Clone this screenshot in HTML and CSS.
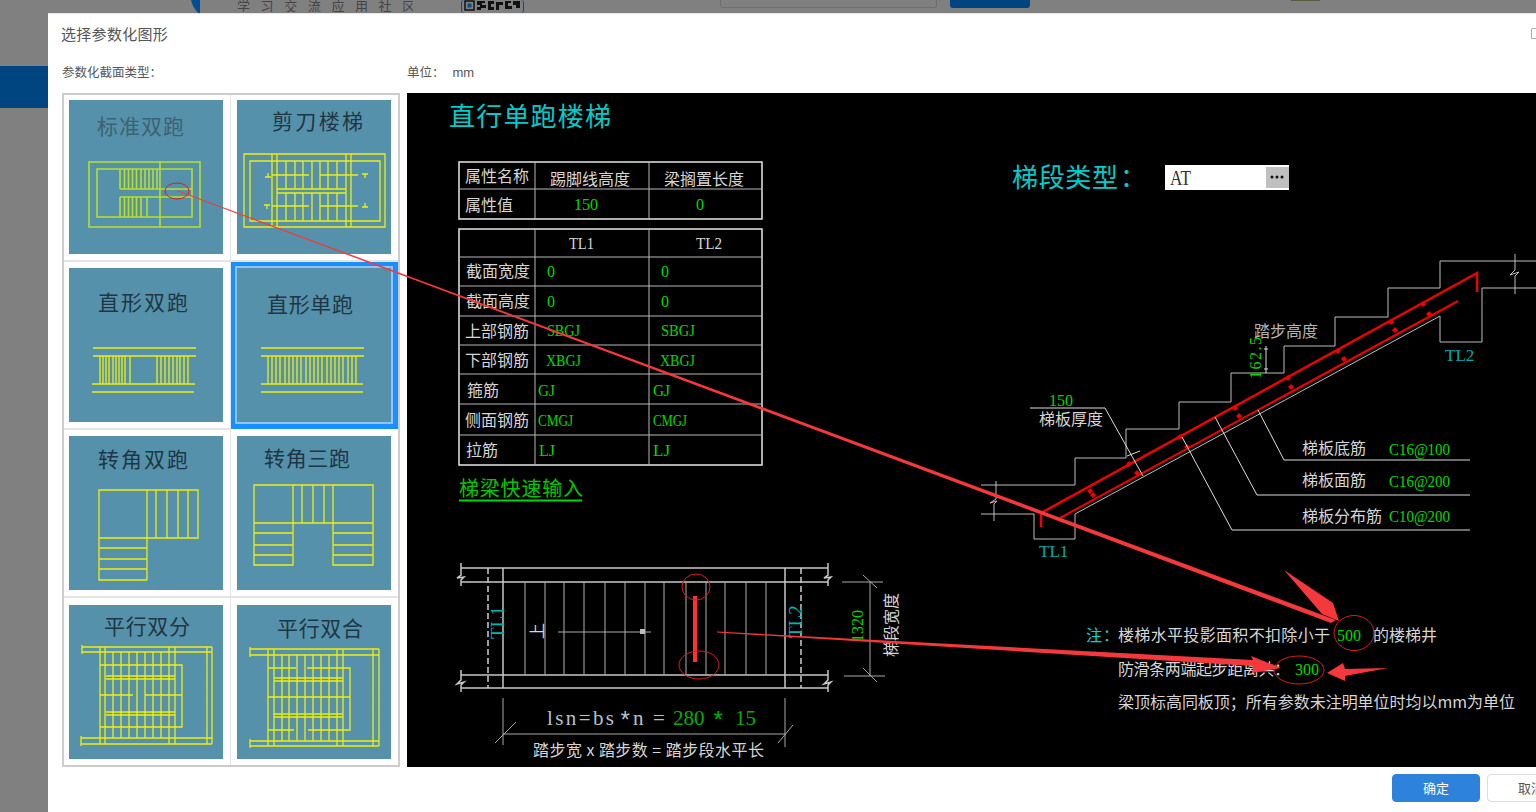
FILE: index.html
```html
<!DOCTYPE html>
<html lang="zh-CN">
<head>
<meta charset="utf-8">
<title>选择参数化图形</title>
<link rel="stylesheet" href="styles.css">
</head>
<body>
<div class="page">
  <header class="topbar">
    <svg class="logo-arc" viewBox="0 0 10 13" width="10" height="13"><path class="arc" d="M1 0C2 4 4 9 8 13H10V0Z"/></svg>
    <span class="slogan">学习交流应用社区</span>
    <div class="qr">
      <svg viewBox="0 0 63 13" width="63" height="13"><rect class="qr-ring" x="4" y="1" width="9" height="9"/><rect class="qr-dot" x="6.5" y="3.5" width="4" height="4"/><path class="qr-blocks" d="M16 1H24V3H21V5H25V8H20V10H16V7H19V5H16ZM27 1H33V4H30V7H33V10H27ZM35 2H42V5H38V10H35ZM44 1H50V3H47V6H51V9H44ZM52 1H59V8H55V5H52Z"/></svg>
    </div>
    <div class="search-box"></div>
    <div class="search-btn"></div>
    <div class="avatar"></div>
  </header>
  <div class="nav-active"></div>

  <section class="dialog">
    <div class="dialog-head">
      <h1 class="dialog-title">选择参数化图形</h1>
      <span class="maximize"></span>
    </div>
    <div class="labels">
      <span class="label-type">参数化截面类型：</span>
      <span class="label-unit">单位：<span class="unit-value">mm</span></span>
    </div>
    <div class="dialog-body">
      <div class="gallery">
        <div class="cell c1 r1">
          <svg class="thumb" viewBox="69 100 154 154" width="154" height="154">
            <text class="thumb-text faded" x="97" y="134" textLength="87">标准双跑</text>
            <path class="ln thick" d="M89 162H200V227H89ZM97 169H192V217H97ZM160 162V227M120 189H192M120 197H192M120 169V189M124.500 169V189M128.500 169V189M132.500 169V189M136.500 169V189M141 169V189M145 169V189M149 169V189M153 169V189M157 169V189M120 197V217M124.500 197V217M128.500 197V217M132.500 197V217M136.500 197V217M141 197V217M147 197V217"/>
          </svg>
        </div>
        <div class="cell c2 r1">
          <svg class="thumb" viewBox="237 100 154 154" width="154" height="154">
            <text class="thumb-text" x="272" y="129" textLength="91">剪刀楼梯</text>
            <path class="ln" d="M244 154H385V227H244ZM250 161H380V221H250ZM272 154V227M277 154V227M346 154V227M351 154V227M286 161V189M295 161V189M303 161V189M312 161V189M320 161V189M328 161V189M337 161V189M286 193V221M295 193V221M303 193V221M312 193V221M320 193V221M328 193V221M337 193V221M277 189H346M277 193H346M272 175H309M320 175H358M272 206H309M320 206H358M265 177H271M268 173V177M362 174H368M365 174V178M264 205H270M267 205V209M362 207H368M365 203V207"/>
          </svg>
        </div>
        <div class="cell c1 r2">
          <svg class="thumb" viewBox="69 268 154 154" width="154" height="154">
            <text class="thumb-text" x="98" y="310" textLength="90">直形双跑</text>
            <path class="ln" d="M93 348H196M93 356H196M92 384H195M92 392H194M100 356V384M103 356V384M106 356V384M109 356V384M113 356V384M116 356V384M119 356V384M122 356V384M125 356V384M130 356V384M157 356V384M161 356V384M165 356V384M169 356V384M173 356V384M177 356V384M180 356V384M184 356V384M188 356V384"/>
          </svg>
        </div>
        <div class="cell c2 r2 selected">
          <svg class="thumb" viewBox="237 268 154 154" width="154" height="154">
            <text class="thumb-text" x="267" y="312" textLength="86">直形单跑</text>
            <path class="ln" d="M261 348H364M261 356H364M261 384H363M261 392H363M268 356V384M272 356V384M276 356V384M280 356V384M285 356V384M289 356V384M293 356V384M297 356V384M301 356V384M306 356V384M310 356V384M314 356V384M318 356V384M322 356V384M327 356V384M331 356V384M335 356V384M339 356V384M343 356V384M348 356V384M352 356V384M356 356V384"/>
          </svg>
        </div>
        <div class="cell c1 r3">
          <svg class="thumb" viewBox="69 436 154 154" width="154" height="154">
            <text class="thumb-text" x="98" y="467" textLength="90">转角双跑</text>
            <path class="ln" d="M99 490H198V538H99ZM147 490V580M99 538V580H147M156 490V538M167 490V538M178 490V538M188 490V538M99 548H147M99 559H147M99 569H147"/>
          </svg>
        </div>
        <div class="cell c2 r3">
          <svg class="thumb" viewBox="237 436 154 154" width="154" height="154">
            <text class="thumb-text" x="264" y="466" textLength="86">转角三跑</text>
            <path class="ln" d="M254 485H373V523H254ZM293 485V523M333 485V523M302 485V523M313 485V523M324 485V523M254 523V565H293V523M333 523V565H373V523M254 533H293M254 545H293M254 555H293M333 533H373M333 545H373M333 555H373"/>
          </svg>
        </div>
        <div class="cell c1 r4">
          <svg class="thumb" viewBox="69 605 154 154" width="154" height="154">
            <text class="thumb-text" x="104" y="634" textLength="86">平行双分</text>
            <path class="ln" d="M82 647H212M82 652H212M81 738H212M81 744H212M100 647V744M105 647V744M169 647V744M175 647V744M207 647V744M212 647V744M113 652V738M121 652V738M129 652V738M137 652V738M145 652V738M153 652V738M161 652V738M100 665H182V727H100M106 676H175M106 679H175M106 712H175M106 715H175M100 695H133M145 695H182M82 645V654M81 736V746"/>
          </svg>
        </div>
        <div class="cell c2 r4">
          <svg class="thumb" viewBox="237 605 154 154" width="154" height="154">
            <text class="thumb-text" x="277" y="636" textLength="86">平行双合</text>
            <path class="ln" d="M250 649H379M250 655H379M250 741H379M250 746H379M268 649V746M274 649V746M337 649V746M343 649V746M373 649V746M379 649V746M282 655V741M289 655V741M297 655V741M305 655V741M313 655V741M321 655V741M329 655V741M268 668H296M307 668H350V730H308M268 730H294M274 678H343M274 681H343M274 714H343M274 717H343M268 697H350M250 647V657M250 739V748"/>
          </svg>
        </div>
      </div>

      <div class="canvas">
        <svg class="cad" viewBox="407 93 1129 674" width="1129" height="674">
          <text class="heading" x="449" y="126" textLength="162">直行单跑楼梯</text>

          <path class="grid-outer" d="M459 162H762V219H459ZM459 229H762V465H459Z"/>
          <path class="grid-line" d="M459 189H762M535 162V219M649 162V219M459 257H762M459 286H762M459 316H762M459 345H762M459 374H762M459 404H762M459 435H762M535 229V465M649 229V465"/>
          <g class="cn">
            <text x="465" y="182">属性名称</text>
            <text x="550" y="185">踢脚线高度</text>
            <text x="664" y="185">梁搁置长度</text>
            <text x="465" y="211">属性值</text>
            <text x="466" y="277">截面宽度</text>
            <text x="466" y="307">截面高度</text>
            <text x="465" y="337">上部钢筋</text>
            <text x="465" y="366">下部钢筋</text>
            <text x="467" y="396">箍筋</text>
            <text x="465" y="426">侧面钢筋</text>
            <text x="466" y="456">拉筋</text>
          </g>
          <g class="latin">
            <text x="569" y="249" textLength="25" lengthAdjust="spacingAndGlyphs">TL1</text>
            <text x="696" y="249" textLength="26" lengthAdjust="spacingAndGlyphs">TL2</text>
          </g>
          <g class="num">
            <text x="574" y="210">150</text>
            <text x="696" y="210">0</text>
            <text x="547" y="277">0</text>
            <text x="661" y="277">0</text>
            <text x="547" y="307">0</text>
            <text x="661" y="307">0</text>
            <text x="547" y="336" textLength="33" lengthAdjust="spacingAndGlyphs">SBGJ</text>
            <text x="661" y="336" textLength="34" lengthAdjust="spacingAndGlyphs">SBGJ</text>
            <text x="546" y="366" textLength="35" lengthAdjust="spacingAndGlyphs">XBGJ</text>
            <text x="660" y="366" textLength="35" lengthAdjust="spacingAndGlyphs">XBGJ</text>
            <text x="538" y="396" textLength="17" lengthAdjust="spacingAndGlyphs">GJ</text>
            <text x="653" y="396" textLength="17" lengthAdjust="spacingAndGlyphs">GJ</text>
            <text x="538" y="426" textLength="35" lengthAdjust="spacingAndGlyphs">CMGJ</text>
            <text x="653" y="426" textLength="34" lengthAdjust="spacingAndGlyphs">CMGJ</text>
            <text x="539" y="456" textLength="16" lengthAdjust="spacingAndGlyphs">LJ</text>
            <text x="653" y="456" textLength="17" lengthAdjust="spacingAndGlyphs">LJ</text>
          </g>
          <text class="quick" x="459" y="496" textLength="124">梯梁快速输入</text>
          <path class="quick-line" d="M459 500.500H582"/>

          <text class="heading" x="1012" y="187" textLength="106">梯段类型</text>
          <text class="heading" x="1120" y="187">：</text>
          <rect class="at-field" x="1165" y="165" width="124" height="25"/>
          <rect class="at-btn" x="1266" y="167" width="23" height="21"/>
          <text class="at-text" x="1170" y="185" textLength="21" lengthAdjust="spacingAndGlyphs">AT</text>
          <circle class="at-dot" cx="1272" cy="177" r="1.500"/>
          <circle class="at-dot" cx="1277" cy="177" r="1.500"/>
          <circle class="at-dot" cx="1282" cy="177" r="1.500"/>

          <path class="struct" d="M981 485H1075V458H1126V429H1179V402H1231V373H1284V346H1335V317H1388V288H1440V261H1536M981 514H1034V539H1075V514L1440 316V342H1482V288H1536M996 481V499L990 503L997 501L994 504V521M1515 254V270L1510 275L1519 272L1515 276V294"/>
          <path class="rebar-top" d="M1041 527V513L1477 273V292"/>
          <path class="rebar-bot" d="M1060 518L1458 301"/>
          <path class="rebar-dots" d="M1090 488l3 3l-3 3l-3 -3ZM1129 461l3 3l-3 3l-3 -3ZM1180 434l3 3l-3 3l-3 -3ZM1235 405l3 3l-3 3l-3 -3ZM1288 375l3 3l-3 3l-3 -3ZM1338 348l3 3l-3 3l-3 -3ZM1391 319l3 3l-3 3l-3 -3ZM1423 301l3 3l-3 3l-3 -3ZM1093 492l3 3l-3 3l-3 -3ZM1137 470l3 3l-3 3l-3 -3ZM1187 444l3 3l-3 3l-3 -3ZM1239 413l3 3l-3 3l-3 -3ZM1291 384l3 3l-3 3l-3 -3ZM1344 356l3 3l-3 3l-3 -3ZM1395 327l3 3l-3 3l-3 -3ZM1429 311l3 3l-3 3l-3 -3Z"/>
          <path class="leader" d="M1030 408H1105L1143 476M1127 456L1140 451M1258 410L1284 460H1470M1215 417L1257 495H1470M1182 437L1232 530H1470M1266 346V373M1264 349H1268M1264 369H1268"/>

          <text class="cn dimmed" x="1254" y="337">踏步高度</text>
          <text class="num" transform="translate(1261 379) rotate(-90)" textLength="42">162.5</text>
          <text class="num" x="1049" y="406">150</text>
          <text class="cn" x="1039" y="425">梯板厚度</text>
          <text class="tl" x="1039" y="557">TL1</text>
          <text class="tl" x="1445" y="361">TL2</text>
          <text class="cn" x="1302" y="454">梯板底筋</text>
          <text class="num" x="1389" y="455" textLength="61" lengthAdjust="spacingAndGlyphs">C16@100</text>
          <text class="cn" x="1302" y="486">梯板面筋</text>
          <text class="num" x="1389" y="487" textLength="61" lengthAdjust="spacingAndGlyphs">C16@200</text>
          <text class="cn" x="1302" y="522">梯板分布筋</text>
          <text class="num" x="1389" y="522" textLength="61" lengthAdjust="spacingAndGlyphs">C10@200</text>

          <path class="plan" d="M461 568H828M461 582H828M461 675H828M461 688H828M503 568V688M785 568V688M461 563V575L457 578L464 577L461 580V586M461 670V680L457 684L464 682L461 685V692M828 563V575L824 578L831 577L828 580V586M828 670V680L824 684L831 682L828 685V692"/>
          <path class="plan-dash" d="M488 568V688M801 568V688"/>
          <path class="tread" d="M525 582V675M545 582V675M564 582V675M584 582V675M605 582V675M625 582V675M645 582V675M664 582V675M686 582V675M706 582V675M725 582V675M746 582V675M766 582V675"/>
          <path class="thin" d="M558 632H651M842 582H883M844 676H885M870 582V676M863 575L877 588M863 668L877 682M503 698V745M785 698V747M503 734H785M495 743L516 722M778 743L793 725"/>
          <rect class="arrow-box" x="640" y="629" width="5" height="5"/>
          <path class="red-bar" d="M695 596V662"/>
          <text class="tl large" transform="translate(504 639) rotate(-90)">TL1</text>
          <text class="tl large" transform="translate(802 638) rotate(-90)">TL2</text>
          <text class="cn" transform="translate(543 639) rotate(-90)">上</text>
          <text class="num" transform="translate(863 642) rotate(-90)">1320</text>
          <text class="cn" transform="translate(897 657) rotate(-90)">梯段宽度</text>
          <text class="formula" x="547" y="725" textLength="67">lsn=bs</text>
          <text class="formula star" x="618" y="729">*</text>
          <text class="formula" x="633" y="725">n</text>
          <text class="formula" x="653" y="725">=</text>
          <text class="formula ok" x="673" y="725">280</text>
          <text class="formula star ok" x="711" y="729">*</text>
          <text class="formula ok" x="735" y="725">15</text>
          <text class="cn" x="533" y="756" textLength="231">踏步宽 x 踏步数 = 踏步段水平长</text>

          <text class="cn cyan" x="1086" y="641">注</text>
          <text class="cn cyan" x="1103" y="641">：</text>
          <text class="cn" x="1118" y="641" textLength="212">楼梯水平投影面积不扣除小于</text>
          <text class="num" x="1337" y="641">500</text>
          <text class="cn" x="1373" y="641">的楼梯井</text>
          <text class="cn" x="1118" y="675" textLength="172">防滑条两端起步距离共：</text>
          <text class="num" x="1295" y="675">300</text>
          <text class="cn" x="1118" y="708" textLength="397">梁顶标高同板顶；所有参数未注明单位时均以mm为单位</text>
        </svg>
      </div>
    </div>
    <div class="dialog-foot">
      <button class="btn primary" type="button">确定</button>
      <button class="btn" type="button">取消</button>
    </div>
  </section>

  <svg class="annotations" viewBox="0 0 1536 812" width="1536" height="812">
    <ellipse class="ring" cx="177" cy="191" rx="12" ry="8"/>
    <ellipse class="ring" cx="696" cy="587" rx="14" ry="13"/>
    <ellipse class="ring" cx="699" cy="665" rx="20" ry="14"/>
    <ellipse class="ring" cx="1354" cy="633" rx="20" ry="17.500"/>
    <ellipse class="ring" cx="1299" cy="670" rx="25" ry="14"/>
    <polygon class="arrow" points="178,190.500 1336,620 1331,623 178,191.500"/>
    <polygon class="arrow" points="1284,570 1333,603 1339,621 1322,614"/>
    <polygon class="arrow" points="717,631.500 1253,660 1251,656 1281,668 1252,673 1253,666 717,632.500"/>
    <polygon class="arrow" points="1327,673 1343,663 1345,669 1388,668 1345,676 1345,681"/>
  </svg>
</div>
</body>
</html>
```
FILE: styles.css
```css
* { box-sizing: border-box; }
html, body { margin: 0; padding: 0; }
body { background: #808080; font-family: "Noto Sans CJK SC", "Liberation Sans", sans-serif; overflow: hidden; }

.page { position: relative; width: 1536px; height: 812px; overflow: hidden; background: #808080; }

/* dimmed page behind the modal */
.topbar { display: flex; align-items: flex-start; height: 13px; overflow: hidden; padding-left: 190px; }
.logo-arc { flex: none; }
.arc { fill: #004f94; }
.slogan { margin-left: 37px; width: 176px; font-size: 13px; line-height: 12px; letter-spacing: 10.600px; color: #444; white-space: nowrap; flex: none; overflow: hidden; }
.qr { flex: none; margin-left: 48px; width: 63px; height: 13px; border: 1px solid #004f94; border-top: 0; border-bottom: 0; border-radius: 3px; line-height: 0; }
.qr svg { margin-left: -1px; }
.qr-ring { fill: none; stroke: #111; stroke-width: 1.500; }
.qr-dot { fill: #004f94; }
.qr-blocks { fill: #111; }
.search-box { flex: none; margin-left: 196px; width: 217px; height: 8px; border: 1px solid #6f6f6f; border-top: 0; border-radius: 0 0 3px 3px; }
.search-btn { flex: none; margin-left: 13px; width: 80px; height: 8px; background: #004480; border-radius: 0 0 3px 3px; }
.avatar { flex: none; margin-left: 261px; width: 29px; height: 1px; background: #5a5a3c; }
.nav-active { margin-top: 53px; width: 48px; height: 42px; background: #004480; }

/* modal */
.dialog { position: absolute; left: 48px; top: 13px; width: 1541px; height: 799px; background: #fff; padding: 0 14px; border-top: 1px solid #e8e8e8; }
.dialog-head { position: relative; height: 43px; padding: 12px 0 0; }
.dialog-title { margin: 0 0 0 -1px; font-size: 15px; line-height: 15px; font-weight: 400; color: #555; letter-spacing: .3px; }
.maximize { position: absolute; left: 1469px; top: 14px; width: 12px; height: 11px; border: 1.500px solid #aaa; border-radius: 1px; }
.labels { display: flex; height: 36px; padding-top: 7px; font-size: 12.500px; line-height: 15px; color: #555; }
.label-type { width: 345px; }
.unit-value { margin-left: 8px; font-family: "Liberation Sans", sans-serif; font-size: 13px; }
.dialog-body { display: flex; gap: 7px; height: 674px; }

.gallery { flex: none; width: 338px; height: 674px; border: 2px solid #ccc; display: grid; grid-template-columns: 167px 167px; grid-template-rows: 167px 168px 168px 167px; }
.cell { padding: 5px 0 0 5px; border-bottom: 2px solid #e4e4e4; border-right: 1px solid #e4e4e4; line-height: 0; }
.c2 { padding-left: 6px; border-right: 0; }
.r2, .r3 { padding-top: 6px; }
.r4 { padding-top: 7px; border-bottom: 0; }
.selected { background: #1890ff; border: 0; margin-bottom: 1px; }
.selected .thumb { outline: 2px solid #91c4ff; }

.thumb { display: block; background: #5591ab; }
.thumb-text { font-size: 21px; fill: #1f3643; }
.thumb-text.faded { fill: #3d6272; }
.ln { fill: none; stroke: #eeee10; stroke-width: 1.300; }
.ln.thick { stroke: #b9de2c; stroke-width: 1.600; }

.canvas { flex: 1; min-width: 0; height: 674px; background: #000; overflow: hidden; }
.cad { display: block; font-family: "Noto Sans CJK SC", sans-serif; }
.heading { font-size: 26px; fill: #00cccc; }
.grid-outer { fill: none; stroke: #e6e6e6; stroke-width: 1.500; }
.grid-line { fill: none; stroke: #b8b8b8; stroke-width: 1; }
.cn, .cn text { font-size: 16px; fill: #d6d6d6; font-family: "Noto Sans CJK SC", sans-serif; }
.cn.dimmed { fill: #b4b4b4; }
.cn.cyan { fill: #00d8d8; }
.num, .num text { font-family: "Liberation Serif", serif; font-size: 16px; fill: #00d800; }
.latin { font-family: "Liberation Serif", serif; font-size: 16px; fill: #d6d6d6; }
.quick { font-size: 20px; fill: #00c800; }
.quick-line { stroke: #00d800; stroke-width: 2; }
.at-field { fill: #fff; }
.at-btn { fill: #c0c0c0; }
.at-text { font-family: "Liberation Serif", serif; font-size: 20px; fill: #333; }
.at-dot { fill: #111; }
.struct { fill: none; stroke: #bdbdbd; stroke-width: 1; }
.rebar-top { fill: none; stroke: #f00000; stroke-width: 2.500; }
.rebar-bot { fill: none; stroke: #f00000; stroke-width: 2; }
.rebar-dots { fill: #f00000; }
.leader { fill: none; stroke: #dcdcdc; stroke-width: 1; }
.tl { font-family: "Liberation Serif", serif; font-size: 17px; fill: #00a8a8; }
.tl.large { font-size: 19px; fill: #00b4b4; }
.plan { fill: none; stroke: #c8c8c8; stroke-width: 1.500; }
.plan-dash { fill: none; stroke: #d0d0d0; stroke-width: 1.500; stroke-dasharray: 6 3; }
.tread { fill: none; stroke: #b0b0b0; stroke-width: 1; }
.thin { fill: none; stroke: #a8a8a8; stroke-width: 1; }
.arrow-box { fill: #bdbdbd; }
.red-bar { stroke: #ff3030; stroke-width: 4; }
.formula { font-family: "Liberation Serif", serif; font-size: 21px; fill: #b8c0c8; }
.formula.ok { fill: #00b000; }
.formula.star { font-family: "Liberation Mono", monospace; font-size: 24px; }

.dialog-foot { display: flex; justify-content: flex-end; gap: 7px; padding-top: 7px; }
.btn { width: 88px; height: 28px; padding: 0; border: 1px solid #ddd; border-radius: 4px; background: #fff; color: #555; font: 13px/26px "Noto Sans CJK SC", sans-serif; }
.primary { background: #2d83dc; border-color: #2d83dc; color: #fff; }

/* red markup drawn over the screenshot */
.annotations { position: absolute; left: 0; top: 0; pointer-events: none; }
.ring { fill: none; stroke: #d42020; stroke-width: 1; }
.arrow { fill: #f5383c; }
```
